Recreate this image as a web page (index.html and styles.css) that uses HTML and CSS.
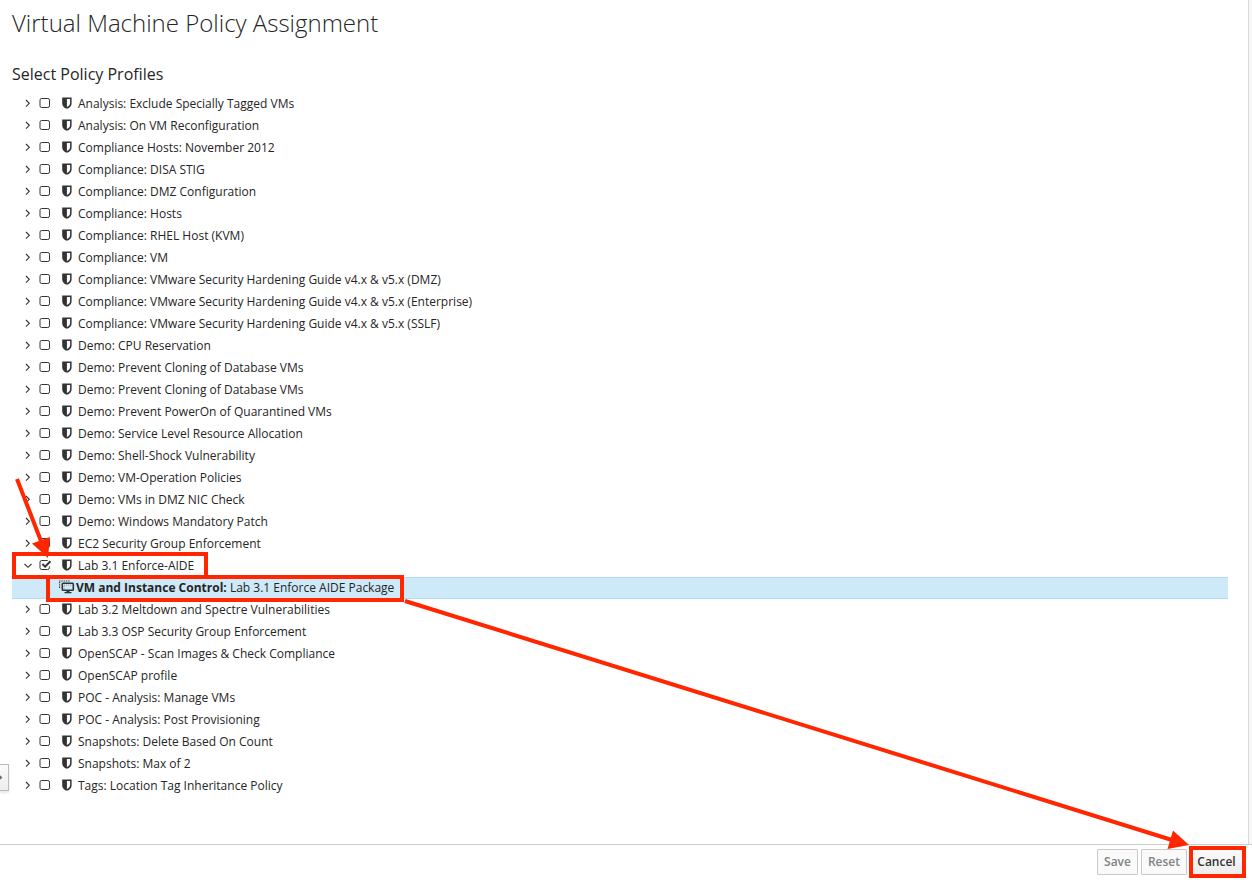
FILE: index.html
```
<!DOCTYPE html>
<html lang="en">
<head>
<meta charset="utf-8">
<title>Virtual Machine Policy Assignment</title>
<link rel="stylesheet" href="styles.css">
</head>
<body>
<svg class="defs" width="0" height="0" aria-hidden="true">
  <symbol id="right" viewBox="0 0 8 10"><path d="M2 2 5.300 5.300 2 8.600" fill="none" stroke="#333" stroke-width="1.1"/></symbol>
  <symbol id="down" viewBox="0 0 8 10"><path d="M.5 4 4 7.300 7.500 4" fill="none" stroke="#333" stroke-width="1.1"/></symbol>
  <symbol id="box" viewBox="0 0 13 12"><rect x="1" y="1.5" width="9.500" height="9" rx="1.700" fill="none" stroke="#333" stroke-width="1"/></symbol>
  <symbol id="checked" viewBox="0 0 13 12"><path d="M10.400 7.300v1.500q0 1.700-1.700 1.700H2.700Q1 10.500 1 8.800V3.200q0-1.700 1.700-1.700h6" fill="none" stroke="#333" stroke-width="1"/><path d="M3.400 5 6.100 7.600 11.500 2.300" fill="none" stroke="#333" stroke-width="2"/></symbol>
  <symbol id="shield" viewBox="0 0 10 12"><path d="M.2.600h9.400v5.800c0 2.400-1.900 4.200-4.700 5.400C2.100 10.600.2 8.800.2 6.400zM4.900 2v8c2.100-1.100 3.200-2.400 3.200-3.800V2z" fill="#333" fill-rule="evenodd"/></symbol>
  <symbol id="machine" viewBox="0 0 16 14"><path d="M0 1h11M.6 2v7" fill="none" stroke="#333" stroke-width="1.100" stroke-dasharray="1.300 1"/><rect x="3.300" y="3.300" width="11" height="6.900" rx=".7" fill="none" stroke="#333" stroke-width="1.600"/><path d="M5 5.100h7M5.200 6v3" fill="none" stroke="#777" stroke-width=".7" stroke-dasharray="1 1"/><path d="M7.500 10.500h3v1.500h2v1.300H5.500V12h2z" fill="#333"/></symbol>
</svg>
<main class="content">
  <h1>Virtual Machine Policy Assignment</h1>
  <h2>Select Policy Profiles</h2>
  <ul class="tree">
    <li><svg class="arrow"><use href="#right"/></svg><svg class="check"><use href="#box"/></svg><svg class="shield"><use href="#shield"/></svg><span>Analysis: Exclude Specially Tagged VMs</span></li>
    <li><svg class="arrow"><use href="#right"/></svg><svg class="check"><use href="#box"/></svg><svg class="shield"><use href="#shield"/></svg><span>Analysis: On VM Reconfiguration</span></li>
    <li><svg class="arrow"><use href="#right"/></svg><svg class="check"><use href="#box"/></svg><svg class="shield"><use href="#shield"/></svg><span>Compliance Hosts: November 2012</span></li>
    <li><svg class="arrow"><use href="#right"/></svg><svg class="check"><use href="#box"/></svg><svg class="shield"><use href="#shield"/></svg><span>Compliance: DISA STIG</span></li>
    <li><svg class="arrow"><use href="#right"/></svg><svg class="check"><use href="#box"/></svg><svg class="shield"><use href="#shield"/></svg><span>Compliance: DMZ Configuration</span></li>
    <li><svg class="arrow"><use href="#right"/></svg><svg class="check"><use href="#box"/></svg><svg class="shield"><use href="#shield"/></svg><span>Compliance: Hosts</span></li>
    <li><svg class="arrow"><use href="#right"/></svg><svg class="check"><use href="#box"/></svg><svg class="shield"><use href="#shield"/></svg><span>Compliance: RHEL Host (KVM)</span></li>
    <li><svg class="arrow"><use href="#right"/></svg><svg class="check"><use href="#box"/></svg><svg class="shield"><use href="#shield"/></svg><span>Compliance: VM</span></li>
    <li><svg class="arrow"><use href="#right"/></svg><svg class="check"><use href="#box"/></svg><svg class="shield"><use href="#shield"/></svg><span>Compliance: VMware Security Hardening Guide v4.x &amp; v5.x (DMZ)</span></li>
    <li><svg class="arrow"><use href="#right"/></svg><svg class="check"><use href="#box"/></svg><svg class="shield"><use href="#shield"/></svg><span>Compliance: VMware Security Hardening Guide v4.x &amp; v5.x (Enterprise)</span></li>
    <li><svg class="arrow"><use href="#right"/></svg><svg class="check"><use href="#box"/></svg><svg class="shield"><use href="#shield"/></svg><span>Compliance: VMware Security Hardening Guide v4.x &amp; v5.x (SSLF)</span></li>
    <li><svg class="arrow"><use href="#right"/></svg><svg class="check"><use href="#box"/></svg><svg class="shield"><use href="#shield"/></svg><span>Demo: CPU Reservation</span></li>
    <li><svg class="arrow"><use href="#right"/></svg><svg class="check"><use href="#box"/></svg><svg class="shield"><use href="#shield"/></svg><span>Demo: Prevent Cloning of Database VMs</span></li>
    <li><svg class="arrow"><use href="#right"/></svg><svg class="check"><use href="#box"/></svg><svg class="shield"><use href="#shield"/></svg><span>Demo: Prevent Cloning of Database VMs</span></li>
    <li><svg class="arrow"><use href="#right"/></svg><svg class="check"><use href="#box"/></svg><svg class="shield"><use href="#shield"/></svg><span>Demo: Prevent PowerOn of Quarantined VMs</span></li>
    <li><svg class="arrow"><use href="#right"/></svg><svg class="check"><use href="#box"/></svg><svg class="shield"><use href="#shield"/></svg><span>Demo: Service Level Resource Allocation</span></li>
    <li><svg class="arrow"><use href="#right"/></svg><svg class="check"><use href="#box"/></svg><svg class="shield"><use href="#shield"/></svg><span>Demo: Shell-Shock Vulnerability</span></li>
    <li><svg class="arrow"><use href="#right"/></svg><svg class="check"><use href="#box"/></svg><svg class="shield"><use href="#shield"/></svg><span>Demo: VM-Operation Policies</span></li>
    <li><svg class="arrow"><use href="#right"/></svg><svg class="check"><use href="#box"/></svg><svg class="shield"><use href="#shield"/></svg><span>Demo: VMs in DMZ NIC Check</span></li>
    <li><svg class="arrow"><use href="#right"/></svg><svg class="check"><use href="#box"/></svg><svg class="shield"><use href="#shield"/></svg><span>Demo: Windows Mandatory Patch</span></li>
    <li><svg class="arrow"><use href="#right"/></svg><svg class="check"><use href="#box"/></svg><svg class="shield"><use href="#shield"/></svg><span>EC2 Security Group Enforcement</span></li>
    <li><svg class="arrow"><use href="#down"/></svg><svg class="check"><use href="#checked"/></svg><svg class="shield"><use href="#shield"/></svg><span>Lab 3.1 Enforce-AIDE</span></li>
    <li class="selected"><svg class="machine"><use href="#machine"/></svg><span><b>VM and Instance Control:</b> Lab 3.1 Enforce AIDE Package</span></li>
    <li><svg class="arrow"><use href="#right"/></svg><svg class="check"><use href="#box"/></svg><svg class="shield"><use href="#shield"/></svg><span>Lab 3.2 Meltdown and Spectre Vulnerabilities</span></li>
    <li><svg class="arrow"><use href="#right"/></svg><svg class="check"><use href="#box"/></svg><svg class="shield"><use href="#shield"/></svg><span>Lab 3.3 OSP Security Group Enforcement</span></li>
    <li><svg class="arrow"><use href="#right"/></svg><svg class="check"><use href="#box"/></svg><svg class="shield"><use href="#shield"/></svg><span>OpenSCAP - Scan Images &amp; Check Compliance</span></li>
    <li><svg class="arrow"><use href="#right"/></svg><svg class="check"><use href="#box"/></svg><svg class="shield"><use href="#shield"/></svg><span>OpenSCAP profile</span></li>
    <li><svg class="arrow"><use href="#right"/></svg><svg class="check"><use href="#box"/></svg><svg class="shield"><use href="#shield"/></svg><span>POC - Analysis: Manage VMs</span></li>
    <li><svg class="arrow"><use href="#right"/></svg><svg class="check"><use href="#box"/></svg><svg class="shield"><use href="#shield"/></svg><span>POC - Analysis: Post Provisioning</span></li>
    <li><svg class="arrow"><use href="#right"/></svg><svg class="check"><use href="#box"/></svg><svg class="shield"><use href="#shield"/></svg><span>Snapshots: Delete Based On Count</span></li>
    <li><svg class="arrow"><use href="#right"/></svg><svg class="check"><use href="#box"/></svg><svg class="shield"><use href="#shield"/></svg><span>Snapshots: Max of 2</span></li>
    <li><svg class="arrow"><use href="#right"/></svg><svg class="check"><use href="#box"/></svg><svg class="shield"><use href="#shield"/></svg><span>Tags: Location Tag Inheritance Policy</span></li>
  </ul>
</main>
<footer class="actions">
  <button disabled>Save</button>
  <button disabled>Reset</button>
  <button class="cancel">Cancel</button>
</footer>
<div class="drawer"><svg width="3" height="7" viewBox="0 0 3 7"><path d="M0 1.200 2.300 3.500 0 5.800z" fill="#666"/></svg></div>
<svg class="annotations" width="1252" height="880" viewBox="0 0 1252 880">
  <g fill="none" stroke="#ff2600" stroke-width="4">
    <rect x="14" y="554" width="192" height="23"/>
    <rect x="48" y="577" width="354" height="23"/>
    <rect x="1191" y="848" width="53" height="28"/>
    <path d="M17 479 41 541M405 601 1172 840"/>
  </g>
  <path d="M48 558 32 543.500 50 537zM1189 845 1167.500 849 1173 830.500z" fill="#ff2600"/>
</svg>
</body>
</html>
```
FILE: styles.css
```
* { box-sizing: border-box; }
body {
  margin: 0;
  height: 880px;
  overflow: hidden;
  display: flex;
  flex-direction: column;
  position: relative;
  background: #fff;
  color: #252525;
  font: 12px/22px "Open Sans", sans-serif;
}
.defs { position: absolute; }
.content {
  height: 844px;
  padding: 10px 20px 0 12px;
  border-right: 3px solid #f7f7f7;
  box-shadow: inset -1px 0 #d9d9d9;
}
h1 { margin: 0; font-size: 24px; line-height: 26px; font-weight: 300; }
h2 { margin: 27px 0 8px; font-size: 16px; line-height: 22px; font-weight: 400; }
.tree { margin: 0; padding: 0 1px 0 0; list-style: none; }
.tree li { display: flex; align-items: center; height: 22px; padding-left: 12px; white-space: nowrap; }
.tree svg { flex: none; margin-bottom: 2px; }
.arrow { width: 8px; height: 10px; }
.tree .check { width: 13px; height: 12px; margin-left: 7px; }
.tree .shield { width: 10px; height: 12px; margin-left: 10px; margin-right: 6px; }
.tree .selected {
  padding-left: 47px;
  background: #cee9f7;
  border: solid #b3dcf0;
  border-width: 1px 0;
}
.tree .machine { width: 16px; height: 14px; margin-right: 1px; }
b { font-weight: 700; }
.actions {
  display: flex;
  gap: 3px;
  height: 36px;
  padding: 4px 8px 0 1097px;
  border-top: 1px solid #ccc;
}
button {
  flex: none;
  height: 26px;
  padding: 0;
  border: 1px solid #bbb;
  border-radius: 1px;
  background: linear-gradient(#fafafa, #ededed);
  color: #333;
  font: 600 12px/20px "Open Sans", sans-serif;
  width: 46px;
}
button:disabled { background: #fafafa; border-color: #c9c9c9; color: #808284; }
button:first-child { width: 41px; }
.actions .cancel { width: 53px; }
.drawer {
  position: absolute;
  left: 0;
  top: 764px;
  width: 9px;
  height: 27px;
  display: flex;
  align-items: center;
  border: 1px solid #bbb;
  border-left: 0;
  background: linear-gradient(#fafafa, #ededed);
  box-shadow: 0 2px 3px rgba(0, 0, 0, .1);
}
.annotations { position: absolute; left: 0; top: 0; pointer-events: none; }
```
